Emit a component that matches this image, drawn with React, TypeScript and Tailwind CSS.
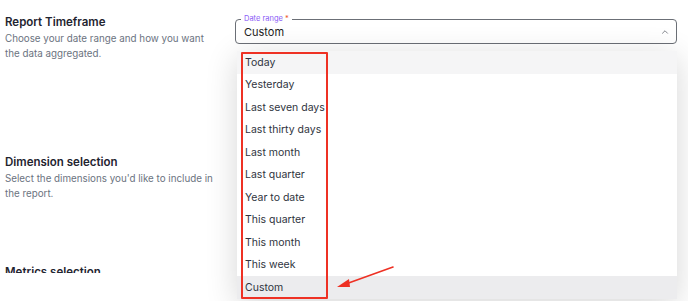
import { ChevronUp } from 'lucide-react';

const options = [
  'Today',
  'Yesterday',
  'Last seven days',
  'Last thirty days',
  'Last month',
  'Last quarter',
  'Year to date',
  'This quarter',
  'This month',
  'This week',
  'Custom',
];

function Section({ title, desc }: { title: string; desc: string }) {
  return (
    <div>
      <h3 className="text-[11.5px] leading-[18px] font-semibold text-[#1f2430]">{title}</h3>
      <p className="text-[9.8px] leading-[15px] text-[#6b7380] w-[215px]">{desc}</p>
    </div>
  );
}

export default function App() {
  return (
    <div
      className="w-[688px] h-[301px] bg-white overflow-hidden flex"
      style={{ fontFamily: 'Inter, "Noto Sans", sans-serif' }}
    >
      {/* Left column */}
      <div className="w-[235px] h-[273px] overflow-hidden pl-[5px] pt-[13px] flex flex-col">
        <Section title="Report Timeframe" desc="Choose your date range and how you want the data aggregated." />
        <div className="mt-[92px]">
          <Section title="Dimension selection" desc="Select the dimensions you'd like to include in the report." />
        </div>
        <div className="mt-[62px]">
          <Section title="Metrics selection" desc="Select the metrics you'd like to include in the report." />
        </div>
      </div>

      {/* Right column */}
      <div className="relative w-[442px] pt-[19px]">
        <div className="relative h-[25px] border border-[#6b6f76] rounded-[4px] flex items-center pl-[8px] pr-[6px]">
          <span className="absolute -top-[7px] left-[5px] bg-white px-[3px] text-[7.5px] leading-[11px] text-[#8b5cf6]">
            Date range <span className="text-[#f0532b]">*</span>
          </span>
          <span className="text-[11px] text-[#222] flex-1 pt-[1px]">Custom</span>
          <ChevronUp size={10} strokeWidth={2} className="text-[#6b6f76]" />
        </div>

        {/* Dropdown menu */}
        <div className="absolute left-[2px] top-[51px] w-[440px] bg-white shadow-[0_6px_30px_rgba(0,0,0,0.16)]">
          {options.map((o, i) => (
            <div
              key={o}
              className={`h-[22.5px] flex items-center pl-[8px] pt-[1px] text-[10.5px] text-[#2f3440] ${
                i === 0 ? 'bg-[#f5f5f6]' : i === options.length - 1 ? 'bg-[#ececee]' : ''
              }`}
            >
              {o}
            </div>
          ))}
        </div>

        {/* Annotation: red box */}
        <div className="absolute left-[6px] top-[52px] w-[87px] h-[247px] border-2 border-[#ee3124] rounded-[1px]" />

        {/* Annotation: arrow */}
        <svg className="absolute left-[100px] top-[262px]" width="65" height="30" viewBox="0 0 65 30">
          <line x1="58" y1="5" x2="8" y2="23" stroke="#ee3124" strokeWidth="1.6" strokeLinecap="round" />
          <polygon points="2,25 14,17 15,25" fill="#ee3124" />
        </svg>
      </div>
    </div>
  );
}
